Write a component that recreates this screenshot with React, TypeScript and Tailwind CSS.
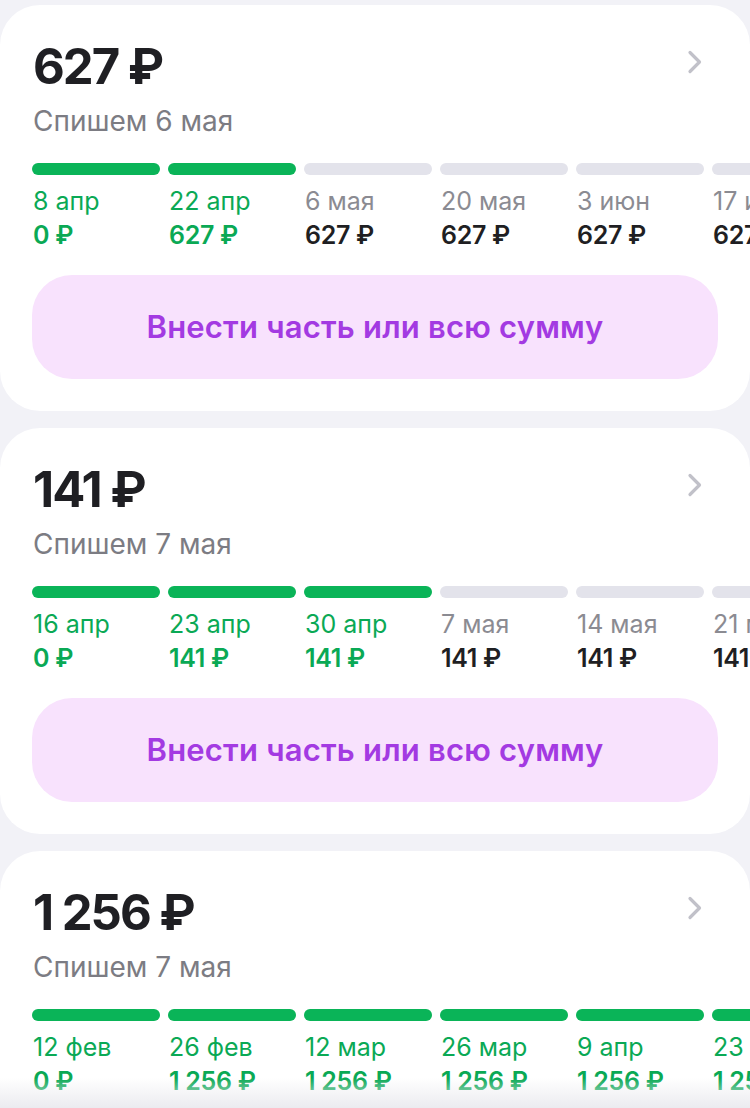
type Step = { date: string; sum: string; done: boolean };

type Plan = { total: string; charge: string; steps: Step[]; button: boolean };

const plans: Plan[] = [
  {
    total: "627 ₽",
    charge: "Спишем 6 мая",
    button: true,
    steps: [
      { date: "8 апр", sum: "0 ₽", done: true },
      { date: "22 апр", sum: "627 ₽", done: true },
      { date: "6 мая", sum: "627 ₽", done: false },
      { date: "20 мая", sum: "627 ₽", done: false },
      { date: "3 июн", sum: "627 ₽", done: false },
      { date: "17 июн", sum: "627 ₽", done: false },
    ],
  },
  {
    total: "141 ₽",
    charge: "Спишем 7 мая",
    button: true,
    steps: [
      { date: "16 апр", sum: "0 ₽", done: true },
      { date: "23 апр", sum: "141 ₽", done: true },
      { date: "30 апр", sum: "141 ₽", done: true },
      { date: "7 мая", sum: "141 ₽", done: false },
      { date: "14 мая", sum: "141 ₽", done: false },
      { date: "21 мая", sum: "141 ₽", done: false },
    ],
  },
  {
    total: "1 256 ₽",
    charge: "Спишем 7 мая",
    button: true,
    steps: [
      { date: "12 фев", sum: "0 ₽", done: true },
      { date: "26 фев", sum: "1 256 ₽", done: true },
      { date: "12 мар", sum: "1 256 ₽", done: true },
      { date: "26 мар", sum: "1 256 ₽", done: true },
      { date: "9 апр", sum: "1 256 ₽", done: true },
      { date: "23 апр", sum: "1 256 ₽", done: true },
    ],
  },
];

export default function App() {
  return (
    <div
      className="relative h-[1108px] w-[750px] overflow-hidden bg-[#f2f2f7] pt-[5px]"
      style={{ fontFamily: "Inter, 'Noto Sans', sans-serif" }}
    >
      <div className="flex flex-col gap-[17px]">
        {plans.map((p, i) => (
          <PlanCard key={i} plan={p} />
        ))}
      </div>

      {/* soft fade over the bottom edge */}
      <div className="pointer-events-none absolute bottom-0 left-0 h-[30px] w-full bg-gradient-to-b from-[#f2f2f700] to-[#ebebf0]" />
    </div>
  );
}

function PlanCard({ plan }: { plan: Plan }) {
  return (
    <div className="overflow-hidden rounded-[40px] bg-white pb-[32px] pt-[36px]">
      <div className="flex items-start justify-between pl-[33px] pr-[47px]">
        <div className="text-[49px] font-bold leading-[52px] tracking-[-2px] text-[#1f1f23]">
          {plan.total}
        </div>
        <svg width="16" height="24" viewBox="0 0 16 24" className="mt-[9px]">
          <path
            d="M3 2.5 L12.5 12 L3 21.5"
            fill="none"
            stroke="#c1c1c9"
            strokeWidth="3.2"
            strokeLinecap="round"
            strokeLinejoin="round"
          />
        </svg>
      </div>

      <div className="mt-[11px] pl-[33px] text-[28px] leading-[34px] text-[#7c7c83]">
        {plan.charge}
      </div>

      <div className="mt-[25px] flex gap-[8px] pl-[32px]">
        {plan.steps.map((s, i) => (
          <div key={i} className="w-[128px] shrink-0">
            <div
              className={`h-[12px] rounded-full ${s.done ? "bg-[#0ab458]" : "bg-[#e3e3eb]"}`}
            />
            <div
              className={`mt-[11px] whitespace-nowrap pl-[1px] text-[25px] leading-[31px] ${
                s.done ? "text-[#0aa955]" : "text-[#8b8b92]"
              }`}
            >
              {s.date}
            </div>
            <div
              className={`mt-[3px] whitespace-nowrap pl-[1px] text-[25px] font-semibold leading-[30px] tracking-[-0.3px] ${
                s.done ? "text-[#0aa955]" : "text-[#1f1f23]"
              }`}
            >
              {s.sum}
            </div>
          </div>
        ))}
      </div>

      {plan.button && (
        <div className="mt-[25px] pl-[32px] pr-[32px]">
          <button className="flex h-[104px] w-full items-center justify-center rounded-[40px] bg-[#f8e2fd] text-[31px] font-semibold tracking-[0.2px] text-[#a33ae2]">
            Внести часть или всю сумму
          </button>
        </div>
      )}
    </div>
  );
}
